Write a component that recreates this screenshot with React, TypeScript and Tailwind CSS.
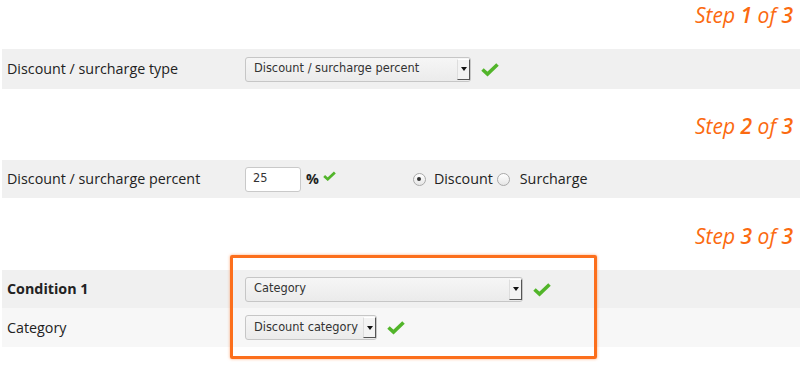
import React from "react";

const Check = ({ small = false }: { small?: boolean }) =>
  small ? (
    <svg width="13" height="10" viewBox="0 0 18 14" className="block">
      <path d="M1.5 7 L6.5 11.5 L16.5 2" stroke="#52b52a" strokeWidth="3.8" fill="none" />
    </svg>
  ) : (
    <svg width="18" height="15" viewBox="0 0 18 14" className="block">
      <path d="M1.5 7 L6.5 11.5 L16.5 2" stroke="#52b52a" strokeWidth="3.6" fill="none" />
    </svg>
  );

const Select = ({ text, w }: { text: string; w: string }) => (
  <div
    className={`${w} flex h-[25px] items-stretch rounded-[3px] border border-[#c6c6c6] bg-gradient-to-b from-[#f6f6f6] to-[#ebebeb] pl-[8px] text-[11.4px] text-[#333]`}
    style={{ fontFamily: '"DejaVu Sans", sans-serif' }}
  >
    <div className="flex flex-1 items-center whitespace-nowrap overflow-hidden">{text}</div>
    <div className="my-[1px] flex w-[13px] items-center justify-center border-b-[1.5px] border-r-[1.5px] border-l border-t border-b-[#555] border-r-[#555] border-l-[#ddd] border-t-[#fff] bg-[#f3f3f3]">
      <svg width="6" height="4" viewBox="0 0 6 4">
        <path d="M0 0 L6 0 L3 4 Z" fill="#111" />
      </svg>
    </div>
  </div>
);

const Step = ({ n, mt }: { n: number; mt: string }) => (
  <div
    className={`${mt} mb-[22px] flex h-[24px] items-center justify-end pr-[7px] text-[21px] italic leading-[24px] text-[#fb6a10]`}
    style={{ fontFamily: '"Open Sans", sans-serif' }}
  >
    <span>Step&nbsp;</span>
    <span className="font-semibold">{n}</span>
    <span>&nbsp;of&nbsp;</span>
    <span className="font-semibold">3</span>
  </div>
);

const Radio = ({ checked }: { checked: boolean }) => (
  <span className="flex h-[13px] w-[13px] items-center justify-center rounded-full border border-[#a9a9a9] bg-gradient-to-b from-[#fff] to-[#e6e6e6]">
    {checked && <span className="h-[4px] w-[4px] rounded-full bg-[#333]" />}
  </span>
);

export default function App() {
  return (
    <div
      className="relative h-[368px] w-[800px] overflow-hidden bg-white text-[14.3px] text-[#222]"
      style={{ fontFamily: '"Open Sans", sans-serif' }}
    >
      <Step n={1} mt="mt-[3px]" />
      <div className="ml-[2px] flex h-[40px] items-center bg-[#f0f0f0]">
        <div className="w-[243px] pl-[5px]">Discount / surcharge type</div>
        <Select text="Discount / surcharge percent" w="w-[226px]" />
        <div className="ml-[10px]">
          <Check />
        </div>
      </div>

      <Step n={2} mt="mt-[25px]" />
      <div className="ml-[2px] flex h-[38px] items-center bg-[#f0f0f0]">
        <div className="w-[243px] pl-[5px]">Discount / surcharge percent</div>
        <div
          className="flex h-[25px] w-[56px] items-center rounded-[3px] border border-[#c9c9c9] bg-white pl-[7px] text-[11.4px] text-[#333]"
          style={{ fontFamily: '"DejaVu Sans", sans-serif' }}
        >
          25
        </div>
        <span className="ml-[5px] font-bold">%</span>
        <span className="ml-[4px] -mt-[6px]">
          <Check small />
        </span>
        <span className="ml-[77px] flex items-center">
          <Radio checked />
        </span>
        <span className="ml-[8px]">Discount</span>
        <span className="ml-[4px] flex items-center">
          <Radio checked={false} />
        </span>
        <span className="ml-[10px]">Surcharge</span>
      </div>

      <Step n={3} mt="mt-[26px]" />
      <div className="ml-[2px] flex h-[38px] items-center bg-[#f0f0f0]">
        <div className="w-[243px] pl-[5px] font-bold">Condition 1</div>
        <Select text="Category" w="w-[278px]" />
        <div className="ml-[10px]">
          <Check />
        </div>
      </div>
      <div className="ml-[2px] flex h-[39px] items-center bg-[#f7f7f7]">
        <div className="w-[243px] pl-[5px]">Category</div>
        <Select text="Discount category" w="w-[132px]" />
        <div className="ml-[10px]">
          <Check />
        </div>
      </div>

      <div className="pointer-events-none absolute left-[230px] top-[255px] h-[104px] w-[367px] rounded-[2px] border-[3px] border-[#fc6f1c] shadow-[0_0_3px_rgba(252,111,28,0.6)]" />
    </div>
  );
}
